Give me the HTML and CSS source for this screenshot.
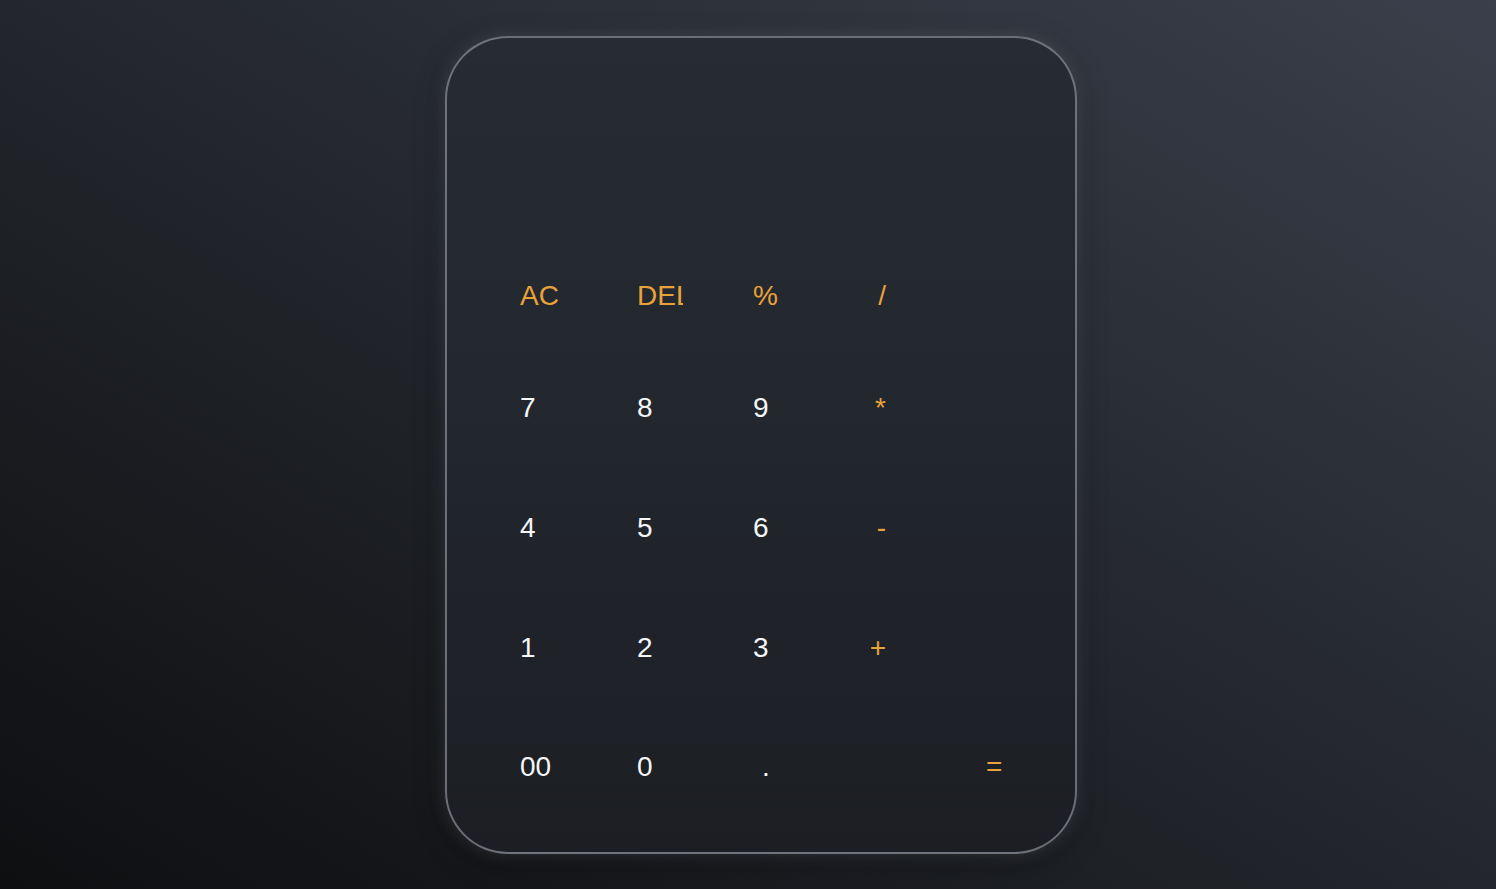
FILE: index.html
```html
<!DOCTYPE html>
<html lang="en">
<head>
<meta charset="utf-8">
<title>Calculator</title>
<link rel="stylesheet" href="styles.css">
</head>
<body>
<main class="stage">
  <section class="calculator">
    <div class="display"></div>
    <div class="keys">
      <button class="key op">AC</button>
      <button class="key op">DEL</button>
      <button class="key op">%</button>
      <button class="key op right">/</button>
      <span class="spacer"></span>

      <button class="key">7</button>
      <button class="key">8</button>
      <button class="key">9</button>
      <button class="key op right">*</button>
      <span class="spacer"></span>

      <button class="key">4</button>
      <button class="key">5</button>
      <button class="key">6</button>
      <button class="key op right">-</button>
      <span class="spacer"></span>

      <button class="key">1</button>
      <button class="key">2</button>
      <button class="key">3</button>
      <button class="key op right">+</button>
      <span class="spacer"></span>

      <button class="key">00</button>
      <button class="key">0</button>
      <button class="key dot">.</button>
      <span class="spacer"></span>
      <button class="key op">=</button>
    </div>
  </section>
</main>
</body>
</html>
```

FILE: styles.css
```css
html, body {
  margin: 0;
  height: 100%;
}

body {
  background: linear-gradient(to top right, #0e0f11 0%, #23262c 50%, #3a3f4b 100%);
  font-family: "Liberation Sans", Arial, sans-serif;
  overflow: hidden;
}

.stage {
  height: 100%;
  box-sizing: border-box;
  padding-left: 26px;
  display: flex;
  align-items: center;
  justify-content: center;
}

.calculator {
  width: 632px;
  height: 818px;
  box-sizing: border-box;
  border: 2px solid rgba(160, 164, 172, 0.6);
  border-radius: 63px;
  background: linear-gradient(to bottom, #272b33 0%, #22262d 50%, #1c1e23 100%);
  box-shadow: 0 0 18px rgba(190, 195, 205, 0.18), 0 8px 30px rgba(0, 0, 0, 0.35);
  padding: 0 0 0 73px;
  display: flex;
  flex-direction: column;
}

.display {
  height: 242px;
  flex: none;
}

.keys {
  display: grid;
  grid-template-columns: 117px 116px 116px 117px 80px;
  grid-template-rows: 112px 120px 120px 119px 32px;
  align-items: start;
  justify-items: start;
}

.key {
  appearance: none;
  background: none;
  border: 0;
  margin: 0;
  padding: 0;
  width: 46px;
  height: 32px;
  overflow: hidden;
  white-space: nowrap;
  text-align: left;
  font-family: "Liberation Sans", Arial, sans-serif;
  font-size: 28px;
  line-height: 32px;
  color: #f4f6f8;
  cursor: pointer;
}

.key.op {
  color: #e9a23a;
}

.key.right {
  width: 17px;
  text-align: right;
  overflow: visible;
}

.key.dot {
  padding-left: 9px;
}

.spacer {
  display: block;
}
```
